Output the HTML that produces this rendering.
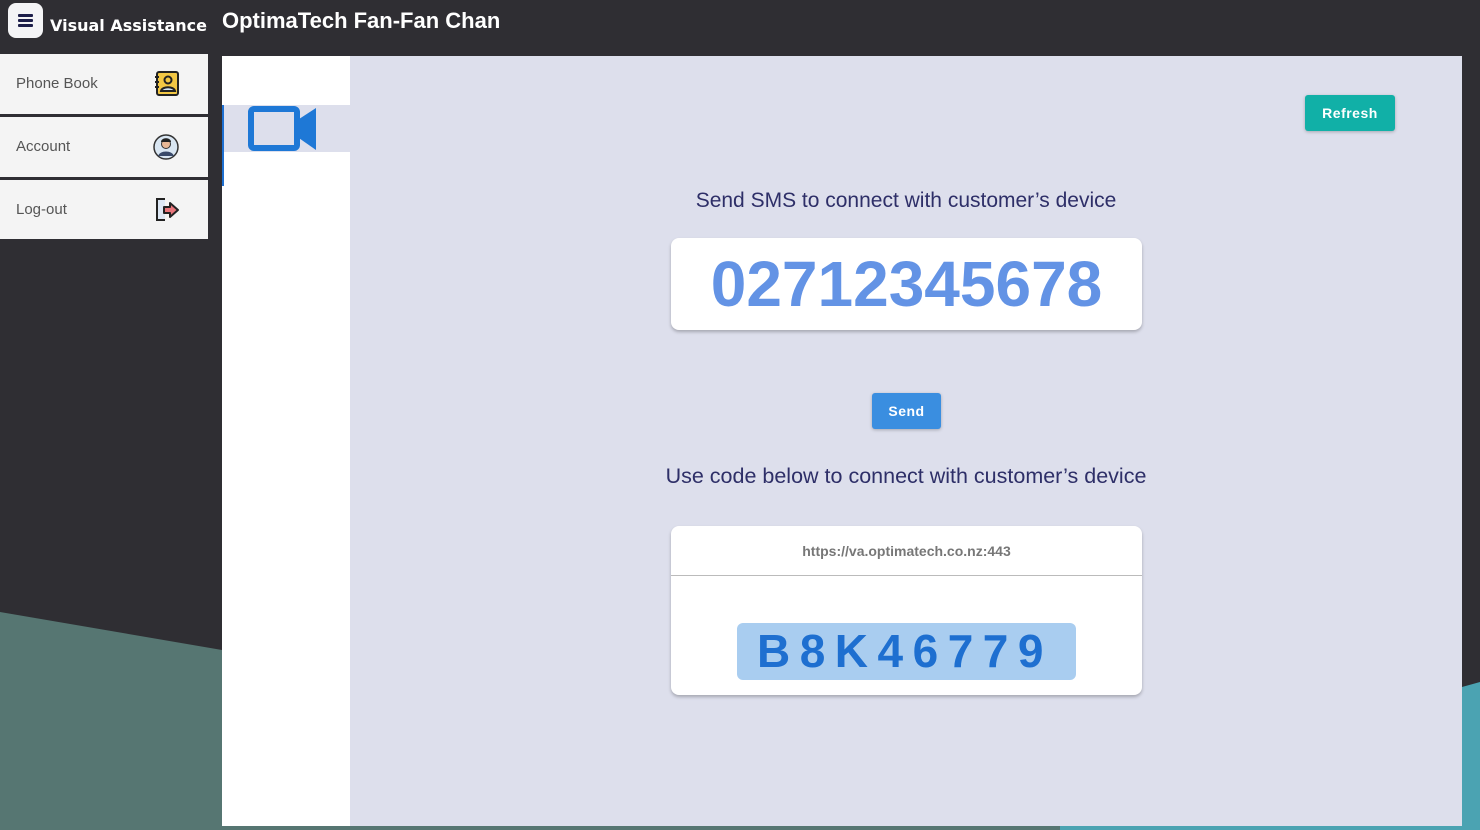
<!DOCTYPE html>
<html><head><meta charset="utf-8"><style>
*{margin:0;padding:0;box-sizing:border-box}
body{width:1480px;height:830px;background:#2f2e33;position:relative;overflow:hidden;font-family:"Liberation Sans",Arial,sans-serif}
.abs{position:absolute}
</style></head><body>
<svg class="abs" style="left:0;top:0" width="1480" height="830">
<polygon points="0,612 222,650 222,830 0,830" fill="#567672"/>
<polygon points="1462,687 1480,682 1480,830 1462,830" fill="#4ba3b2"/>
<rect x="222" y="824" width="1258" height="6" fill="#567672"/>
<rect x="1060" y="824" width="420" height="6" fill="#4ba3b2"/>
</svg>
<div class="abs" style="left:8px;top:3px;width:35px;height:35px;background:#f4f4f6;border-radius:8px">
<div class="abs" style="left:10px;top:11px;width:15px;height:3px;background:#1d1e4a;border-radius:1px"></div>
<div class="abs" style="left:10px;top:16px;width:15px;height:3px;background:#1d1e4a;border-radius:1px"></div>
<div class="abs" style="left:10px;top:21px;width:15px;height:3px;background:#1d1e4a;border-radius:1px"></div>
</div>
<div class="abs" style="left:50px;top:16px;color:#fff;font-weight:bold;font-size:16px;font-family:'DejaVu Sans',sans-serif">Visual Assistance</div>
<div class="abs" style="left:222px;top:8px;color:#fff;font-weight:bold;font-size:22px">OptimaTech Fan-Fan Chan</div>

<div class="abs" style="left:0;top:54px;width:208px;height:60px;background:#f4f4f4"></div>
<div class="abs" style="left:0;top:117px;width:208px;height:60px;background:#f4f4f4"></div>
<div class="abs" style="left:0;top:180px;width:208px;height:59px;background:#f4f4f4"></div>
<div class="abs" style="left:16px;top:75px;font-size:15px;color:#555">Phone Book</div>
<div class="abs" style="left:16px;top:138px;font-size:15px;color:#555">Account</div>
<div class="abs" style="left:16px;top:201px;font-size:15px;color:#555">Log-out</div>
<svg class="abs" style="left:154px;top:71px" width="26" height="26"><rect x="3" y="1" width="21" height="23" rx="2" fill="#f2c744" stroke="#222" stroke-width="2"/><circle cx="14" cy="9" r="3.5" fill="none" stroke="#222" stroke-width="2"/><path d="M7 20c1-5 13-5 14 0z" fill="#cfe3f5" stroke="#222" stroke-width="2"/><path d="M1 6h4M1 11h4M1 16h4" stroke="#222" stroke-width="2"/></svg>
<svg class="abs" style="left:153px;top:134px" width="26" height="26"><circle cx="13" cy="13" r="12" fill="#d9e6f2" stroke="#333" stroke-width="1.5"/><circle cx="13" cy="10" r="4.5" fill="#e8b896" stroke="#333"/><path d="M8 8c0-5 10-5 10 0" fill="#222"/><path d="M5 22c2-6 14-6 16 0" fill="#3a4a6a"/></svg>
<svg class="abs" style="left:154px;top:197px" width="26" height="26"><path d="M11 2H3v21h8" fill="#dde8f5" stroke="#222" stroke-width="2"/><path d="M10 10h6V6l8 7-8 7v-4h-6z" fill="#e8757b" stroke="#222" stroke-width="2" stroke-linejoin="round"/></svg>

<div class="abs" style="left:222px;top:56px;width:128px;height:770px;background:#fff"></div>
<div class="abs" style="left:222px;top:105px;width:128px;height:47px;background:#dddfec"></div>
<div class="abs" style="left:222px;top:105px;width:2px;height:81px;background:#1e6fd0"></div>
<svg class="abs" style="left:248px;top:106px" width="70" height="46"><rect x="3" y="3" width="46" height="39" rx="3" fill="none" stroke="#1e78d6" stroke-width="6"/><polygon points="48,15 68,2 68,44 48,30" fill="#1e78d6"/></svg>

<div class="abs" style="left:350px;top:56px;width:1112px;height:770px;background:#dddfec"></div>
<div class="abs" style="left:1305px;top:95px;width:90px;height:36px;background:#11b0a7;border-radius:3px;color:#fff;font-weight:bold;font-size:14px;text-align:center;line-height:36px;letter-spacing:0.5px;box-shadow:0 1px 3px rgba(0,0,0,.25)">Refresh</div>
<div class="abs" style="left:350px;top:189px;width:1112px;text-align:center;font-size:21px;color:#2e2f68">Send SMS to connect with customer’s device</div>
<div class="abs" style="left:671px;top:238px;width:471px;height:92px;background:#fff;border-radius:8px;box-shadow:0 2px 3px rgba(0,0,0,.25);text-align:center;color:#6393e5;font-weight:bold;font-size:64px;line-height:92px">02712345678</div>
<div class="abs" style="left:872px;top:393px;width:69px;height:36px;background:#3a8ee0;border-radius:3px;color:#fff;font-weight:bold;font-size:14px;text-align:center;line-height:36px;letter-spacing:0.5px;box-shadow:0 1px 3px rgba(0,0,0,.25)">Send</div>
<div class="abs" style="left:350px;top:464px;width:1112px;text-align:center;font-size:21.5px;color:#2e2f68">Use code below to connect with customer’s device</div>
<div class="abs" style="left:671px;top:526px;width:471px;height:169px;background:#fff;border-radius:8px;box-shadow:0 2px 3px rgba(0,0,0,.25)">
<div style="height:50px;line-height:50px;text-align:center;color:#777;font-weight:bold;font-size:14px;border-bottom:1.5px solid #bbb">https://va.optimatech.co.nz:443</div>
<div class="abs" style="left:66px;top:97px;width:339px;height:57px;background:#a9cdf0;border-radius:6px;color:#1e6fd0;font-weight:bold;font-size:46px;line-height:57px;letter-spacing:9.5px;padding-left:20px">B8K46779</div>
</div>
</body></html>
